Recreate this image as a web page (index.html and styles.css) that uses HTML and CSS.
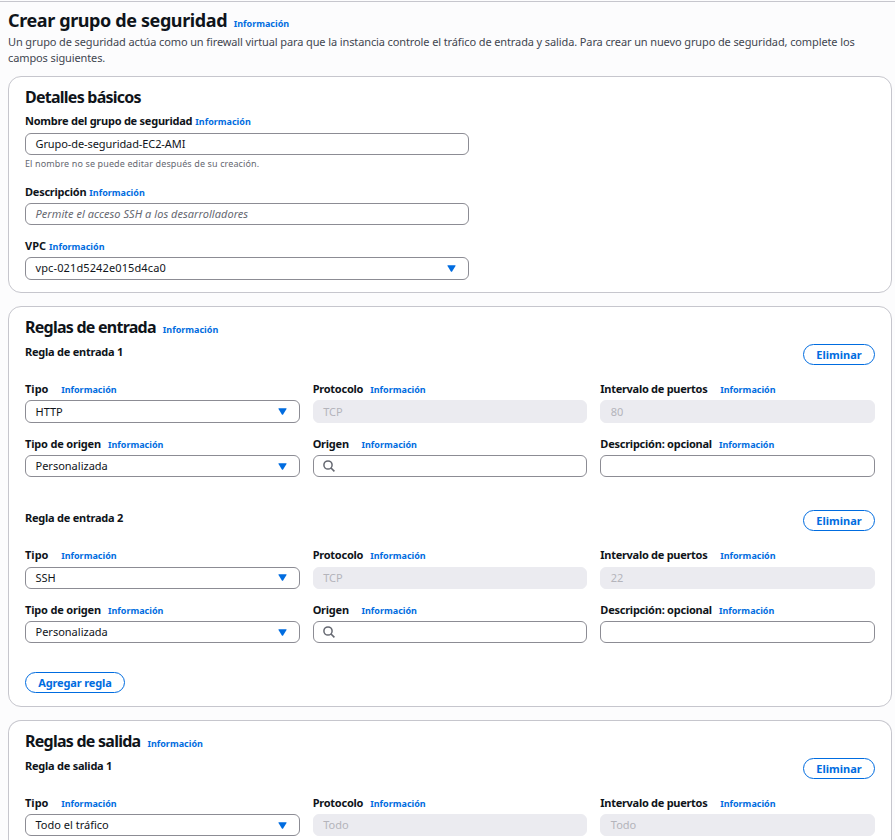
FILE: index.html
```html
<!DOCTYPE html>
<html lang="es">
<head>
<meta charset="utf-8">
<title>Crear grupo de seguridad</title>
<link rel="stylesheet" href="styles.css">
</head>
<body>
<svg class="sprite" aria-hidden="true">
  <symbol id="caret" viewBox="0 0 9 7"><path d="M.9.3h7.2q.7 0 .4.6L5.1 6.4q-.6.8-1.2 0L.5.9Q.2.3.9.3z" fill="#006ce0"/></symbol>
  <symbol id="search" viewBox="0 0 12 12"><circle cx="5" cy="5" r="4.1" fill="none" stroke="#656871" stroke-width="1.5"/><path d="M8 8l3.4 3.4" stroke="#656871" stroke-width="1.6"/></symbol>
</svg>
<main class="page">
  <header class="page-header">
    <div class="title-row"><h1>Crear grupo de seguridad</h1><a class="info">Información</a></div>
    <p class="intro">Un grupo de seguridad actúa como un firewall virtual para que la instancia controle el tráfico de entrada y salida. Para crear un nuevo grupo de seguridad, complete los<br>campos siguientes.</p>
  </header>

  <section class="card details">
    <div class="card-title"><h2>Detalles básicos</h2></div>
    <div class="field name-field">
      <div class="label tight"><b>Nombre del grupo de seguridad</b><a class="info">Información</a></div>
      <div class="control"><span class="name-value">Grupo-de-seguridad-EC2-AMI</span></div>
      <div class="hint">El nombre no se puede editar después de su creación.</div>
    </div>
    <div class="field">
      <div class="label tight"><b>Descripción</b><a class="info">Información</a></div>
      <div class="control"><span class="placeholder">Permite el acceso SSH a los desarrolladores</span></div>
    </div>
    <div class="field">
      <div class="label tight"><b class="short">VPC</b><a class="info">Información</a></div>
      <div class="control tall"><span class="vpc-value">vpc-021d5242e015d4ca0</span><svg class="caret"><use href="#caret"/></svg></div>
    </div>
  </section>

  <section class="card inbound">
    <div class="card-title"><h2>Reglas de entrada</h2><a class="info">Información</a></div>
    <div class="rule">
      <div class="rule-head"><b>Regla de entrada 1</b><button class="btn">Eliminar</button></div>
      <div class="grid">
        <div><div class="label wide"><b class="short">Tipo</b><a class="info">Información</a></div><div class="control tall"><span>HTTP</span><svg class="caret"><use href="#caret"/></svg></div></div>
        <div><div class="label"><b>Protocolo</b><a class="info">Información</a></div><div class="control tall disabled"><span>TCP</span></div></div>
        <div><div class="label wide"><b class="long">Intervalo de puertos</b><a class="info">Información</a></div><div class="control tall disabled"><span>80</span></div></div>
        <div><div class="label"><b class="medium">Tipo de origen</b><a class="info">Información</a></div><div class="control"><span>Personalizada</span><svg class="caret"><use href="#caret"/></svg></div></div>
        <div><div class="label wide"><b>Origen</b><a class="info">Información</a></div><div class="control"><svg class="search"><use href="#search"/></svg></div></div>
        <div><div class="label"><b>Descripción: opcional</b><a class="info">Información</a></div><div class="control"></div></div>
      </div>
    </div>
    <div class="rule second">
      <div class="rule-head"><b>Regla de entrada 2</b><button class="btn">Eliminar</button></div>
      <div class="grid">
        <div><div class="label wide"><b class="short">Tipo</b><a class="info">Información</a></div><div class="control tall"><span>SSH</span><svg class="caret"><use href="#caret"/></svg></div></div>
        <div><div class="label"><b>Protocolo</b><a class="info">Información</a></div><div class="control tall disabled"><span>TCP</span></div></div>
        <div><div class="label wide"><b class="long">Intervalo de puertos</b><a class="info">Información</a></div><div class="control tall disabled"><span>22</span></div></div>
        <div><div class="label"><b class="medium">Tipo de origen</b><a class="info">Información</a></div><div class="control"><span>Personalizada</span><svg class="caret"><use href="#caret"/></svg></div></div>
        <div><div class="label wide"><b>Origen</b><a class="info">Información</a></div><div class="control"><svg class="search"><use href="#search"/></svg></div></div>
        <div><div class="label"><b>Descripción: opcional</b><a class="info">Información</a></div><div class="control"></div></div>
      </div>
    </div>
    <button class="btn add">Agregar regla</button>
  </section>

  <section class="card outbound">
    <div class="card-title"><h2>Reglas de salida</h2><a class="info">Información</a></div>
    <div class="rule">
      <div class="rule-head"><b>Regla de salida 1</b><button class="btn">Eliminar</button></div>
      <div class="grid">
        <div><div class="label wide"><b class="short">Tipo</b><a class="info">Información</a></div><div class="control"><span>Todo el tráfico</span><svg class="caret"><use href="#caret"/></svg></div></div>
        <div><div class="label"><b>Protocolo</b><a class="info">Información</a></div><div class="control disabled"><span>Todo</span></div></div>
        <div><div class="label wide"><b class="long">Intervalo de puertos</b><a class="info">Información</a></div><div class="control disabled"><span>Todo</span></div></div>
      </div>
    </div>
  </section>
</main>
</body>
</html>
```
FILE: styles.css
```css
* { box-sizing: border-box; }
body {
  margin: 0;
  padding-top: 1px;
  background: #fcfcfd;
  color: #0f141a;
  font-family: "Noto Sans", "Open Sans", sans-serif;
  font-size: 11px;
  line-height: 16px;
}
.sprite { display: none; }
h1, h2, p { margin: 0; }
.page { border-top: 1px solid #c6c6cd; padding: 0 3px 0 8px; }
.page-header { height: 74px; padding-top: 5px; }
.title-row { display: flex; align-items: baseline; gap: 6.5px; height: 27px; }
h1 { font-size: 18px; line-height: 26px; letter-spacing: -0.39px; }
h2 { font-size: 16px; line-height: 24px; font-stretch: 87.5%; letter-spacing: -0.75px; }
.info { color: #006ce0; font-size: 9px; font-weight: 700; }
.intro { color: #424650; letter-spacing: -0.112px; white-space: nowrap; }

.card { border: 1px solid #c6c6cd; border-radius: 13px; background: #fff; padding: 8px 16px 0; margin-bottom: 13px; }
.details { height: 217px; }
.inbound { height: 401px; }
.outbound { height: 120px; margin-bottom: 0; border-bottom: 0; border-radius: 13px 13px 0 0; }
.card-title { display: flex; align-items: baseline; gap: 7px; height: 24px; }

.field { width: 444px; margin-bottom: 10px; }
.label { display: flex; align-items: baseline; gap: 7px; height: 22px; line-height: 22px; }
.label b, .rule-head b { letter-spacing: -0.24px; }
.label .short { letter-spacing: 0; }
.label .medium { letter-spacing: -0.18px; }
.label .long { letter-spacing: -0.28px; }
.label.tight { gap: 3px; }
.label.wide { gap: 12.7px; }
.name-field { height: 71px; margin-top: 1px; margin-bottom: 0; }
.name-field .label { height: 23px; }
.hint { color: #656871; font-size: 9px; line-height: 18px; letter-spacing: 0.12px; }
.control { display: flex; align-items: center; height: 22px; border: 1px solid #8c8c94; border-radius: 6px; padding: 0 12px 0 9.5px; background: #fff; }
.control.tall { height: 23px; }
.control.disabled { background: #ebebf0; border-color: #ebebf0; color: #b4b4bb; }
.name-value { letter-spacing: -0.09px; }
.vpc-value { letter-spacing: 0.12px; line-height: 14px; padding-bottom: 2px; }
.placeholder { color: #656871; font-style: italic; letter-spacing: 0.04px; }
.caret { width: 9px; height: 7px; margin-left: auto; }
.search { width: 12px; height: 12px; margin-left: -0.5px; }

.rule { height: 166px; padding-top: 5px; }
.outbound .rule { height: auto; }
.rule-head { display: flex; justify-content: space-between; height: 34px; }
.rule-head b { line-height: 16px; }
.btn { height: 21px; border: 1px solid #006ce0; border-radius: 11px; background: #fff; color: #006ce0; font: 700 11px/19px "Noto Sans", sans-serif; width: 72px; padding: 0; }
.btn.add { display: block; width: 100px; margin-top: 1px; letter-spacing: -0.14px; }
.grid { display: grid; grid-template-columns: repeat(3, 1fr); column-gap: 13px; row-gap: 10px; }
.second .control.tall { height: 22px; margin-top: 1px; }
.second .control.tall .caret { margin-bottom: 1px; }
```
